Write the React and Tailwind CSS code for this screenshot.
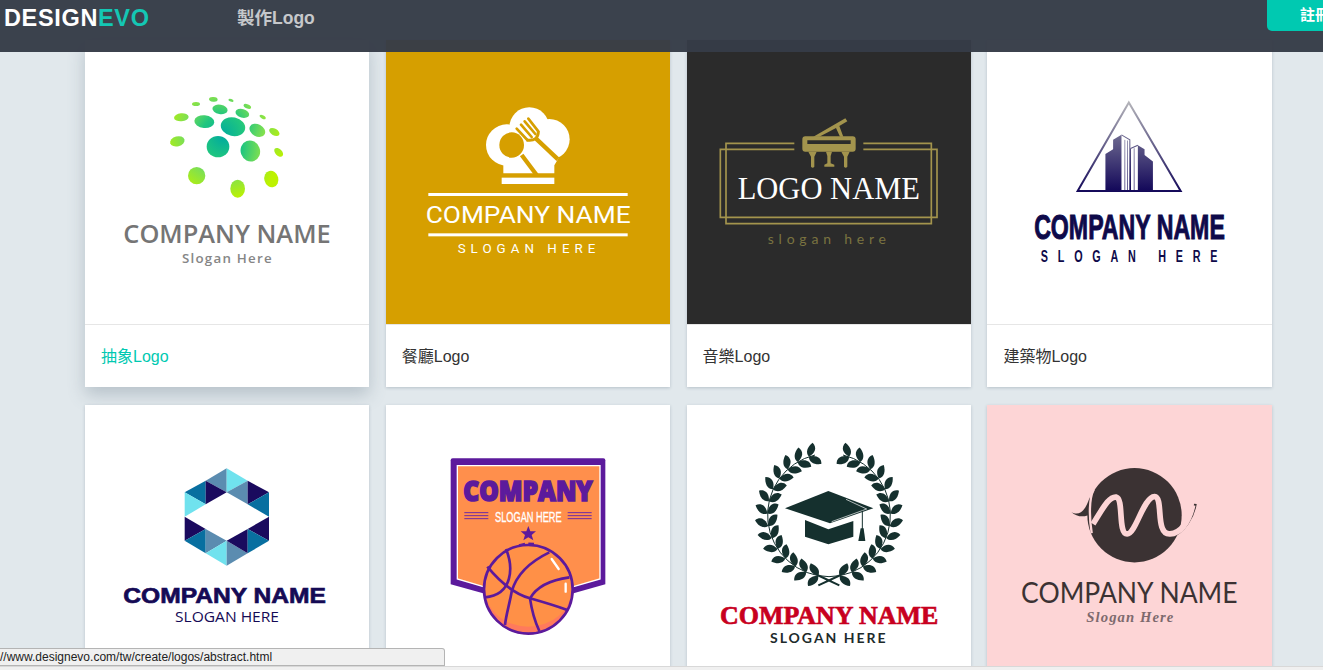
import React from 'react';

// text inside a logo, fitted between two x positions; squeeze narrows the glyphs
const T = ({ x1, x2, y, size, font = 'Liberation Sans', weight = 400, fill, italic, bold = 0, squeeze = 1, adjust = 'spacingAndGlyphs', children }) => (
    <text
        x={x1}
        y={y}
        textLength={(x2 - x1) / squeeze}
        lengthAdjust={adjust}
        fontFamily={`'${font}', sans-serif`}
        fontSize={size}
        fontWeight={weight}
        fontStyle={italic ? 'italic' : 'normal'}
        fill={fill}
        stroke={bold ? fill : 'none'}
        strokeWidth={bold}
        transform={squeeze === 1 ? undefined : `translate(${x1} 0) scale(${squeeze} 1) translate(${-x1} 0)`}
    >
        {children}
    </text>
);

const Art = ({ box, children }) => (
    <svg viewBox={`${box} 852 852`} preserveAspectRatio="xMidYMid slice" className="block h-[284px] w-full">
        {children}
    </svg>
);

const dots = [
    [280, 58, 13, 7, 5], [228, 72, 12, 6, 0], [333, 61, 8, 4, 20], [382, 79, 12, 6, 25],
    [300, 88, 23, 14, 10], [367, 100, 21, 13, 15], [428, 111, 10, 5, 30], [184, 112, 22, 12, -5],
    [253, 125, 30, 19, 5], [339, 140, 37, 28, 12], [412, 151, 25, 18, 28], [463, 156, 17, 10, 30],
    [172, 184, 22, 15, -15], [294, 200, 34, 32, 0], [391, 213, 29, 32, -20], [476, 217, 16, 10, 45],
    [230, 287, 26, 26, 0], [353, 326, 22, 27, 0], [454, 297, 21, 25, -15],
];

const AbstractLogo = () => (
    <Art box="-105 -120">
        <defs>
            <radialGradient id="dotFill" gradientUnits="userSpaceOnUse" cx="310" cy="170" r="190">
                <stop offset="0" stopColor="#00ab9e" />
                <stop offset="0.35" stopColor="#20c67f" />
                <stop offset="0.65" stopColor="#80e050" />
                <stop offset="1" stopColor="#bdf200" />
            </radialGradient>
        </defs>
        {dots.map(([cx, cy, rx, ry, r]) => (
            <ellipse key={`${cx}-${cy}`} cx={cx} cy={cy} rx={rx} ry={ry} fill="url(#dotFill)" transform={`rotate(${r} ${cx} ${cy})`} />
        ))}
        <T x1={10} x2={632} y={488} size={78} font="Open Sans" weight={600} fill="#757575">COMPANY NAME</T>
        <T x1={186} x2={455} y={550} size={40} font="Open Sans" weight={600} fill="#868686" adjust="spacing">Slogan Here</T>
    </Art>
);

const RestaurantLogo = () => (
    <Art box="-72 -150">
        <rect x="-72" y="-150" width="852" height="852" fill="#d69f00" />
        <g fill="#fff">
            <circle cx="290" cy="165" r="62" />
            <circle cx="358" cy="112" r="60" />
            <circle cx="418" cy="148" r="61" />
            <path d="M280 190 L280 250 L433 250 L433 226 L446 204 L400 110 L300 120 Z" />
            <rect x="275" y="263" width="158" height="19" />
        </g>
        <g fill="none" stroke="#d69f00" strokeLinecap="butt">
            <path d="M378 146 L444 208" strokeWidth="13" />
            <path d="M335 195 L380 255" strokeWidth="13" />
            <path d="M320 116 L352 150 M333 104 L365 141 M344 94 L376 132 M355 86 L385 124" strokeWidth="8" strokeLinecap="round" />
            <path d="M350 150 Q385 155 385 124" strokeWidth="9" />
        </g>
        <ellipse cx="305" cy="165" rx="37" ry="38" fill="#d69f00" />
        <g fill="#fff">
            <rect x="55" y="309" width="598" height="9" />
            <rect x="55" y="430" width="598" height="9" />
        </g>
        <T x1={47} x2={662} y={400} size={70} font="Roboto" fill="#fff">COMPANY NAME</T>
        <T x1={143} x2={556} y={490} size={40} font="Roboto" fill="#fff" adjust="spacing">SLOGAN HERE</T>
    </Art>
);

const MusicLogo = () => (
    <Art box="-39 -180">
        <rect x="-39" y="-180" width="852" height="852" fill="#2b2b2b" />
        <g fill="none" stroke="#a3944d" strokeWidth="5">
            <path d="M283 130 L78 130 L78 371 L694 371 L694 130 L490 130" />
            <path d="M283 148 L61 148 L61 352 L711 352 L711 148 L490 148" />
        </g>
        <g fill="#a3944d">
            <path d="M316 109 L458 109 Q467 109 467 118 L467 146 Q467 155 458 155 L316 155 Q307 155 307 146 L307 118 Q307 109 316 109 Z M322 121 L322 132 L452 132 L452 121 Z" fillRule="evenodd" />
            <path d="M340 110 L436 55 L442 64 L418 78 L430 110 L420 110 L408 84 L358 110 Z" />
            <path d="M325 155 L350 155 L343 170 L343 200 Q338 206 333 200 L333 170 Z" />
            <path d="M424 155 L449 155 L442 170 L442 200 Q437 206 432 200 L432 170 Z" />
            <path d="M378 155 L396 155 L392 168 L392 190 L403 194 L403 200 L373 200 L373 194 L382 190 L382 168 Z" />
        </g>
        <T x1={113} x2={660} y={298} size={92} font="Liberation Serif" fill="#fff">LOGO NAME</T>
        <T x1={203} x2={558} y={432} size={42} font="Lato" fill="#7a7340" adjust="spacing">slogan here</T>
    </Art>
);

const BuildingLogo = () => (
    <Art box="-99 -150">
        <defs>
            <linearGradient id="triLine" gradientUnits="userSpaceOnUse" x1="0" y1="35" x2="0" y2="305">
                <stop offset="0" stopColor="#b5b5ba" />
                <stop offset="1" stopColor="#14095a" />
            </linearGradient>
            <linearGradient id="tower" gradientUnits="userSpaceOnUse" x1="0" y1="135" x2="0" y2="300">
                <stop offset="0" stopColor="#6e6a90" />
                <stop offset="1" stopColor="#14095a" />
            </linearGradient>
        </defs>
        <path d="M325 38 L172 303 L480 303 Z" fill="none" stroke="url(#triLine)" strokeWidth="6" />
        <g fill="url(#tower)">
            <path d="M255 300 L255 192 L278 178 L278 150 L303 135 L303 300 Z" />
            <path d="M352 166 L372 178 L372 195 L397 215 L397 300 L352 300 Z" />
        </g>
        <g fill="none" stroke="url(#tower)" strokeWidth="3">
            <path d="M303 135 L328 150 L328 300" />
            <path d="M330 176 L352 166" />
            <path d="M330 176 L330 300" />
            <path d="M313 150 L313 300 M321 152 L321 300 M341 175 L341 300" strokeWidth="2" />
        </g>
        <T x1={42} x2={612} y={447} size={105} weight={700} fill="#0e0a4a" bold={3} squeeze={0.68}>COMPANY NAME</T>
        <T x1={62} x2={590} y={515} size={52} weight={700} fill="#0e0a4a" squeeze={0.62} adjust="spacing">SLOGAN HERE</T>
    </Art>
);

const navy = '#1a0a5e';
const blue = '#086fa0';
const steel = '#5b8cb0';
const cyan = '#70e2ee';
const facets = [
    ['224,127 287,92 287,163', blue], ['287,92 350,55 350,127', steel], ['287,92 350,127 287,163', navy],
    ['350,55 413,92 350,127', cyan], ['350,127 413,92 413,163', steel], ['413,92 477,127 413,163', navy],
    ['413,163 477,127 477,200', blue], ['224,127 287,163 224,200', cyan], ['224,200 287,237 224,272', navy],
    ['224,272 287,237 287,310', blue], ['287,237 350,272 287,310', steel], ['287,310 350,272 350,347', cyan],
    ['350,272 413,310 350,347', steel], ['350,272 413,237 413,310', navy], ['413,237 477,200 477,272', navy],
    ['413,237 477,272 413,310', blue],
];

const HexLogo = () => (
    <Art box="-75 -135">
        {facets.map(([points, fill]) => <polygon key={points} points={points} fill={fill} />)}
        <T x1={40} x2={648} y={460} size={65} weight={700} fill="#150a55" bold={2}>COMPANY NAME</T>
        <T x1={195} x2={507} y={517} size={44} font="Open Sans" fill="#150a55">SLOGAN HERE</T>
    </Art>
);

const BasketballLogo = () => (
    <Art box="-132 -120">
        <path d="M68 40 L520 40 Q526 40 526 46 L526 418 L420 448 L170 448 L62 418 L62 46 Q62 40 68 40 Z" fill="#5c1a9c" />
        <path d="M82 62 L510 62 L510 402 L420 428 L170 428 L82 402 Z" fill="#ff8f4c" stroke="#fff" strokeWidth="4" />
        <T x1={100} x2={488} y={168} size={84} font="Open Sans" weight={800} fill="#5c1a9c" bold={5}>COMPANY</T>
        <T x1={195} x2={395} y={230} size={44} fill="#fff" bold={1} squeeze={0.72}>SLOGAN HERE</T>
        <path d="M103 203 L175 203 M103 212 L175 212 M103 221 L175 221 M413 203 L485 203 M413 212 L485 212 M413 221 L485 221" stroke="#6d2ba3" strokeWidth="3" />
        <polygon points="295,243 301,259 318,259 305,270 310,286 295,277 280,286 285,270 272,259 289,259" fill="#5c1a9c" />
        <path d="M267 301 L285 297 M295 296 L312 297" stroke="#5c1a9c" strokeWidth="7" fill="none" />
        <circle cx="295" cy="433" r="135" fill="#ff9047" />
        <path d="M165 433 A130 130 0 0 0 425 433 A130 112 0 0 1 165 433 Z" fill="#ff7a5c" />
        <circle cx="295" cy="433" r="133" fill="none" stroke="#5c1a9c" strokeWidth="8" />
        <g fill="none" stroke="#5c1a9c" strokeWidth="8">
            <path d="M172 365 C205 405 245 445 300 460 C335 470 375 482 412 495" />
            <path d="M358 322 C300 350 260 385 245 440 C238 480 228 510 225 540" />
            <path d="M228 312 C250 365 250 450 165 457" />
            <path d="M418 397 C360 405 320 425 300 460 C305 495 315 530 328 558" />
        </g>
        <path d="M365 342 L386 372 M407 416 L407 440" stroke="#fff" strokeWidth="7" strokeLinecap="round" />
    </Art>
);

const leafAngles = Array.from({ length: 14 }, (_, i) => 19 + i * 11.6);
const Branch = () => (
    <g>
        <path d="M357 410 A185 185 0 0 1 315 45" fill="none" stroke="#15302e" strokeWidth="3" />
        {leafAngles.map((a) => (
            <g key={a} transform={`translate(357 225) rotate(${-a}) translate(0 -185)`} fill="#15302e">
                <path d="M0 0 C-7 -16 6 -30 24 -36 C33 -18 21 -3 0 0 Z" />
                <path d="M0 0 C-5 16 6 28 28 33 C36 15 21 1 0 0 Z" />
            </g>
        ))}
    </g>
);

const GraduationLogo = () => (
    <Art box="-69 -105">
        <Branch />
        <g transform="matrix(-1 0 0 1 714 0)"><Branch /></g>
        <path d="M325 436 L392 405 M388 436 L322 405" stroke="#15302e" strokeWidth="6" />
        <path d="M225 205 L355 153 L490 205 L360 250 Z" fill="#15302e" />
        <path d="M365 245 L470 207 L408 178" fill="none" stroke="#fff" strokeWidth="2" />
        <path d="M285 240 L355 268 L430 243 L430 290 L355 313 L285 290 Z" fill="#15302e" />
        <path d="M457 212 L457 268" stroke="#15302e" strokeWidth="3" />
        <path d="M452 265 L461 265 L466 303 L445 303 Z" fill="#15302e" />
        <T x1={30} x2={685} y={552} size={78} font="Liberation Serif" weight={700} fill="#c8001e" bold={2}>COMPANY NAME</T>
        <T x1={180} x2={527} y={608} size={42} font="Lato" weight={700} fill="#1d2b2b" adjust="spacing">SLOGAN HERE</T>
    </Art>
);

const LetterLogo = () => (
    <Art box="-69 -165">
        <rect x="-69" y="-165" width="852" height="852" fill="#fdd5d6" />
        <circle cx="372" cy="166" r="141" fill="#3b3233" />
        <path d="M183 156 C205 170 225 155 238 112 L245 160 C225 174 200 172 183 156 Z" fill="#3b3233" />
        <path d="M554 132 C548 170 522 215 480 232" fill="none" stroke="#3b3233" strokeWidth="8" />
        <path d="M250 90 C236 115 236 170 244 220" fill="none" stroke="#fdd5d6" strokeWidth="7" />
        <path d="M248 192 C275 150 295 108 318 112 C340 118 322 222 350 222 C376 222 398 112 432 110 C460 112 432 224 478 222 C508 220 534 190 546 136" fill="none" stroke="#fdd5d6" strokeWidth="17" />
        <T x1={33} x2={680} y={427} size={85} font="Lato" fill="#3b3233">COMPANY NAME</T>
        <T x1={228} x2={488} y={485} size={44} font="Liberation Serif" weight={700} italic fill="#7d6a6e" adjust="spacing">Slogan Here</T>
    </Art>
);

const cards = [
    { art: AbstractLogo, label: '抽象Logo', active: true },
    { art: RestaurantLogo, label: '餐廳Logo' },
    { art: MusicLogo, label: '音樂Logo' },
    { art: BuildingLogo, label: '建築物Logo' },
    { art: HexLogo },
    { art: BasketballLogo },
    { art: GraduationLogo },
    { art: LetterLogo },
];

export default function App() {
    return (
        <div className="relative h-[670px] w-[1323px] overflow-hidden bg-[#e1e8ec] font-['Liberation_Sans','Noto_Sans_CJK_TC',sans-serif]">
            <header className="absolute inset-x-0 top-0 z-10 flex h-[52px] items-start overflow-hidden bg-[#363c47]/[0.97]">
                <div className="ml-1 mt-[4px] w-[146px] text-[23.5px] leading-[28px] font-bold tracking-[0.65px] text-white">
                    DESIGN<span className="text-[#14c7b4]">EVO</span>
                </div>
                <a className="ml-[87px] mt-[5px] text-[17.5px] leading-[26px] font-bold text-[#c6c8cb]">製作Logo</a>
                <button className="ml-auto -mr-[44px] h-[31px] w-[100px] shrink-0 rounded-b-[5px] bg-[#00c9b1] pl-[33px] text-left text-[15px] font-bold text-white">
                    註冊
                </button>
            </header>

            <main className="grid grid-cols-[284px_284px_284px_285px] gap-x-[16.8px] gap-y-[18px] pl-[85px] pt-[40px]">
                {cards.map(({ art: Logo, label, active }, i) => (
                    <div key={i} className={`bg-white ${active ? 'shadow-[0_8px_16px_rgba(90,110,125,0.3)]' : 'shadow-[0_1px_3px_rgba(90,110,125,0.3)]'}`}>
                        <Logo />
                        {label && (
                            <div className={`flex h-[63px] items-center border-t border-[#e6e6e6] pl-4 pt-0.5 text-base ${active ? 'text-[#00c9b1]' : 'text-[#333]'}`}>
                                {label}
                            </div>
                        )}
                    </div>
                ))}
            </main>

            <div className="absolute inset-x-0 bottom-0 z-20 h-1 border-t border-[#d8d8d8] bg-[#f0f0f0]" />
            <div className="absolute bottom-1 left-0 z-20 flex h-[18px] w-[445px] items-center overflow-hidden rounded-tr-[3px] border border-l-0 border-[#b4b4b4] bg-[#f0f0f0] text-[12px] text-[#222]">
                //www.designevo.com/tw/create/logos/abstract.html
            </div>
        </div>
    );
}
